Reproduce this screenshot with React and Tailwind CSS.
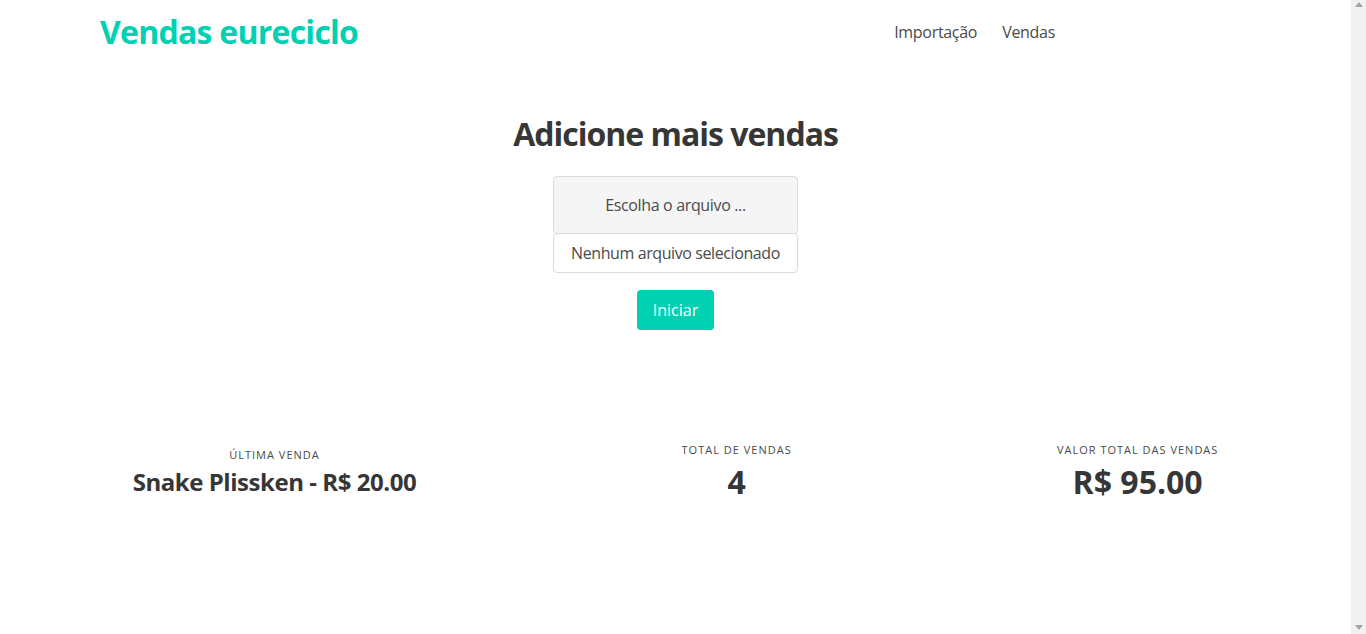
export default function App() {
  const font = { fontFamily: '"Open Sans", "Noto Sans", sans-serif' };
  return (
    <div className="flex w-full h-[634px] overflow-hidden bg-white" style={font}>
      <div className="flex-1 flex flex-col">
        <header className="h-16 flex items-center pl-[100px] pr-[296px]">
          <div className="text-[32px] font-bold text-[#00d1b2] leading-none tracking-[-0.75px]">Vendas eureciclo</div>
          <nav className="ml-auto flex items-center gap-[25px] text-[16px] text-[#4a4a4a] tracking-[-0.3px]">
            <a>Importação</a>
            <a>Vendas</a>
          </nav>
        </header>
        <main className="flex flex-col items-center">
          <h1 className="mt-[50px] text-[32px] leading-[40px] font-bold text-[#363636] tracking-[-1px]">Adicione mais vendas</h1>
          <div className="mt-[22px] w-[245px] flex flex-col text-[16px] text-[#4a4a4a]">
            <div className="h-[58px] flex items-center justify-center bg-[#f5f5f5] border border-[#dbdbdb] rounded-[4px] tracking-[-0.35px]">Escolha o arquivo ...</div>
            <div className="h-[40px] flex items-center justify-center bg-white border border-[#dbdbdb] rounded-[4px] -mt-px tracking-[-0.4px]">Nenhum arquivo selecionado</div>
          </div>
          <button className="mt-[17px] w-[77px] h-[40px] bg-[#00d1b2] text-white text-[16px] rounded-[4px]">Iniciar</button>
        </main>
        <section className="mt-[112px] flex items-center text-center">
          <div className="flex-auto">
            <p className="text-[11px] leading-[16.5px] tracking-[1px] uppercase text-[#4a4a4a] mb-[5px]">Última venda</p>
            <p className="text-[24px] leading-[27px] font-bold text-[#363636] tracking-[-0.45px]">Snake Plissken - R$ 20.00</p>
          </div>
          <div className="flex-auto">
            <p className="text-[11px] leading-[16.5px] tracking-[1px] uppercase text-[#4a4a4a] mb-[5px]">Total de vendas</p>
            <p className="text-[32px] leading-[36px] font-bold text-[#363636]">4</p>
          </div>
          <div className="flex-auto">
            <p className="text-[11px] leading-[16.5px] tracking-[1px] uppercase text-[#4a4a4a] mb-[5px]">Valor total das vendas</p>
            <p className="text-[32px] leading-[36px] font-bold text-[#363636]">R$ 95.00</p>
          </div>
        </section>
      </div>
      <div className="w-[15px] bg-[#f1f1f1] flex flex-col items-center justify-between pt-[2px] pb-[4px]">
        <svg width="8" height="5" viewBox="0 0 8 5"><path d="M4 0 L8 5 L0 5 Z" fill="#a3a3a3" /></svg>
        <svg width="8" height="5" viewBox="0 0 8 5"><path d="M0 0 L8 0 L4 5 Z" fill="#a3a3a3" /></svg>
      </div>
    </div>
  );
}
